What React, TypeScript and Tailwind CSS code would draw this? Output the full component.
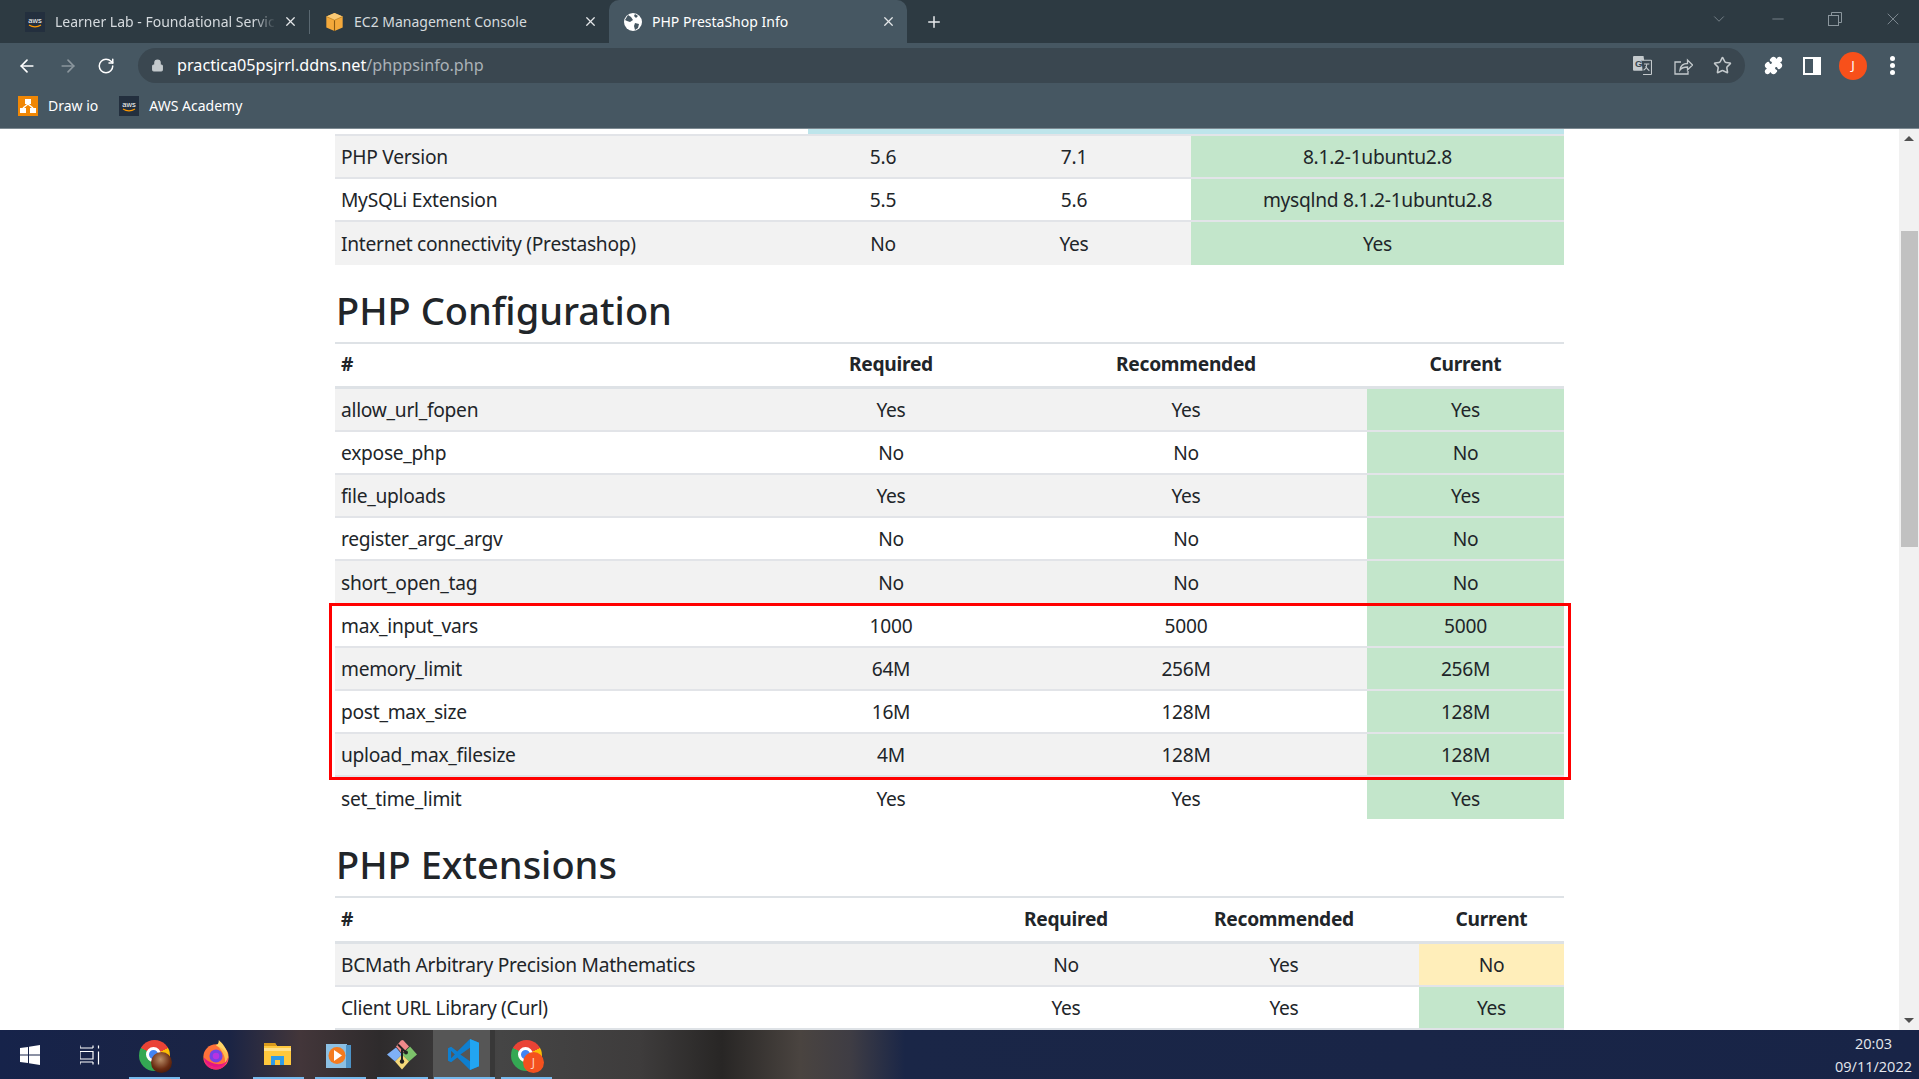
import type { ReactNode } from 'react'
import { ArrowLeft, ArrowRight, RotateCw, Lock, Plus, X, ChevronDown, Minus, Star, Puzzle } from 'lucide-react'

const font = "font-['Noto_Sans',sans-serif]"

const versionRows = [
  ['PHP Version', '5.6', '7.1', '8.1.2-1ubuntu2.8'],
  ['MySQLi Extension', '5.5', '5.6', 'mysqlnd 8.1.2-1ubuntu2.8'],
  ['Internet connectivity (Prestashop)', 'No', 'Yes', 'Yes'],
]

const configRows = [
  ['allow_url_fopen', 'Yes', 'Yes', 'Yes'],
  ['expose_php', 'No', 'No', 'No'],
  ['file_uploads', 'Yes', 'Yes', 'Yes'],
  ['register_argc_argv', 'No', 'No', 'No'],
  ['short_open_tag', 'No', 'No', 'No'],
  ['max_input_vars', '1000', '5000', '5000'],
  ['memory_limit', '64M', '256M', '256M'],
  ['post_max_size', '16M', '128M', '128M'],
  ['upload_max_filesize', '4M', '128M', '128M'],
  ['set_time_limit', 'Yes', 'Yes', 'Yes'],
]

const extensionRows = [
  ['BCMath Arbitrary Precision Mathematics', 'No', 'Yes', 'No'],
  ['Client URL Library (Curl)', 'Yes', 'Yes', 'Yes'],
]

function AwsIcon() {
  return (
    <svg width="20" height="20" viewBox="0 0 20 20" className="shrink-0">
      <rect width="20" height="20" fill="#232f3e" />
      <text x="10" y="11" textAnchor="middle" fontSize="7.500" fill="#fff" fontFamily="Liberation Sans">aws</text>
      <path d="M4 13c4 2.500 8 2.500 12 0" stroke="#f90" strokeWidth="1.200" fill="none" />
    </svg>
  )
}

function Tab({ label, icon, active, fade, className }: { label: string; icon: ReactNode; active?: boolean; fade?: boolean; className: string }) {
  return (
    <div className={`flex h-full items-center pr-[11px] ${className} ${active ? 'rounded-t-[10px] bg-[#465762]' : ''}`}>
      {icon}
      <span
        className={`ml-[10px] flex-1 overflow-hidden whitespace-nowrap text-[14px] ${active ? 'text-white' : 'text-[#d5dade]'} ${
          fade ? '[mask-image:linear-gradient(90deg,#000_90%,transparent)]' : ''
        }`}
      >
        {label}
      </span>
      <X size={15} className="ml-[7px] shrink-0 text-[#e4e7e9]" strokeWidth={2} />
    </div>
  )
}

function TabStrip() {
  return (
    <div className="flex h-[43px] shrink-0 items-center bg-[#2d3a42]">
      <Tab label="Learner Lab - Foundational Servic" icon={<AwsIcon />} fade className="w-[309px] pl-[25px]" />
      <div className="h-[24px] w-px bg-[#5a6871]" />
      <Tab
        label="EC2 Management Console"
        className="w-[299px] pl-[15px]"
        icon={
          <svg width="19" height="20" viewBox="0 0 20 22" className="shrink-0">
            <path d="M10 1l9 4v12l-9 4-9-4V5z" fill="#f4a93b" />
            <path d="M10 1l9 4-9 4-9-4z" fill="#f9c975" />
            <path d="M10 9v12" stroke="#8a5a12" strokeWidth="1.200" />
            <path d="M1 5l9 4 9-4" stroke="#b97d1f" strokeWidth="0.800" fill="none" />
          </svg>
        }
      />
      <Tab
        label="PHP PrestaShop Info"
        active
        className="w-[298px] pl-[15px]"
        icon={
          <svg width="18" height="18" viewBox="0 0 18 18" className="shrink-0">
            <circle cx="9" cy="9" r="9" fill="#fff" />
            <path d="M4 2l3 2 2 3-3 2-3-1-2-1zM11 10l4 1-1 4-3 2-1-4zM11 1l3 2-2 2-2-2z" fill="#465762" />
          </svg>
        }
      />
      <Plus size={18} className="ml-[18px] text-[#e8eaed]" strokeWidth={2} />
      <div className="flex-1" />
      <div className="flex items-center gap-[41px] pb-[6px] pr-[16px] text-[#8b969d]">
        <ChevronDown size={18} strokeWidth={1} />
        <Minus size={18} strokeWidth={1} />
        <svg width="14" height="14" viewBox="0 0 14 14" fill="none" stroke="currentColor">
          <rect x="0.500" y="3.500" width="10" height="10" />
          <path d="M3.500 3V.5h10v10H11" />
        </svg>
        <X size={20} strokeWidth={1} />
      </div>
    </div>
  )
}

function Toolbar() {
  return (
    <div className="flex h-[45px] shrink-0 items-start bg-[#465762] pt-[5px]">
      <div className="flex h-[35px] w-[138px] shrink-0 items-center pl-[17px] text-white">
        <ArrowLeft size={20} strokeWidth={2} />
        <ArrowRight size={20} strokeWidth={2} className="ml-[21px] text-[#8b969d]" />
        <RotateCw size={18} strokeWidth={2} className="ml-[19px]" />
      </div>
      <div className="flex h-[35px] w-[1607px] shrink-0 items-center rounded-full bg-[#3a4750] pl-[13px] pr-[13px]">
        <Lock size={13} className="text-[#c4cacd]" fill="#c4cacd" />
        <span className="ml-[13px] text-[16.200px] text-white">
          practica05psjrrl.ddns.net<span className="text-[#aab2b7]">/phppsinfo.php</span>
        </span>
        <div className="flex-1" />
        <div className="flex items-center text-[#c4cacd]">
          <svg width="19" height="19" viewBox="0 0 18 18">
            <path d="M1 0h9l2 14H1a1 1 0 0 1-1-1V1a1 1 0 0 1 1-1z" fill="#c4cacd" />
            <path d="M8 4h9a.5.5 0 0 1 .5.5V17a.5.5 0 0 1-.5.5H9.500" fill="#3a4750" stroke="#c4cacd" />
            <text x="5.500" y="10" textAnchor="middle" fontSize="9" fontWeight="700" fill="#3a4750" fontFamily="Liberation Sans">G</text>
            <path d="M10.500 7.500h5M13 7.500c0 3-1.500 5-3 6M12 9.500c.8 2 2 3.500 3.500 4.500" stroke="#c4cacd" strokeWidth="1" fill="none" />
          </svg>
          <svg width="19" height="18" viewBox="0 0 19 18" fill="none" stroke="currentColor" strokeWidth="1.300" className="ml-[22px]">
            <path d="M7 5H1v12h13v-3" />
            <path d="M6 13c.5-4 3.500-6.500 7.500-6.500V3L18.500 8l-5 5V10C10 10 7.500 11 6 13z" />
          </svg>
          <Star size={19} strokeWidth={2} className="ml-[20px]" />
        </div>
      </div>
      <div className="flex h-[35px] flex-1 items-center pl-[19px] text-white">
        <Puzzle size={19} fill="#fff" />
        <div className="ml-[20px] flex h-[18px] w-[18px] justify-end border-[2px] border-white bg-[#465762]">
          <div className="h-full w-[6px] bg-white" />
        </div>
        <div className="ml-[18px] flex h-[28px] w-[28px] items-center justify-center rounded-full bg-[#f8501a] text-[13px]">J</div>
        <div className="ml-[23px] flex flex-col gap-[2px]">
          <div className="h-[5px] w-[5px] rounded-full bg-white" />
          <div className="h-[5px] w-[5px] rounded-full bg-white" />
          <div className="h-[5px] w-[5px] rounded-full bg-white" />
        </div>
      </div>
    </div>
  )
}

function Bookmarks() {
  return (
    <div className="flex h-[41px] shrink-0 items-center border-b border-[#7d8a92] bg-[#465762] pb-[5px] pl-[18px] text-[14px] text-white">
      <svg width="20" height="20" viewBox="0 0 20 20" className="shrink-0">
        <rect width="20" height="20" fill="#f08705" />
        <rect x="7" y="3" width="6" height="5" fill="#fff" />
        <rect x="2" y="12" width="6" height="5" fill="#fff" />
        <rect x="12" y="12" width="6" height="5" fill="#fff" />
        <path d="M10 8l-5 4M10 8l5 4" stroke="#fff" strokeWidth="1.500" />
      </svg>
      <span className="ml-[10px]">Draw io</span>
      <div className="ml-[21px]">
        <AwsIcon />
      </div>
      <span className="ml-[10px]">AWS Academy</span>
    </div>
  )
}

function Cell({ children, bg, center }: { children: string; bg?: string; center?: boolean }) {
  return <td className={`overflow-hidden whitespace-nowrap px-[6px] pb-0 pt-[2px] ${center ? 'text-center' : ''} ${bg ?? ''}`}>{children}</td>
}

function DataTable({
  rows,
  cols,
  currentBg,
  head,
  bottomLine,
}: {
  rows: string[][]
  cols: number[]
  currentBg?: (r: string[]) => string
  head?: boolean
  bottomLine?: boolean
}) {
  return (
    <table className={`w-[1229px] table-fixed border-collapse ${bottomLine ? 'border-b-2 border-[#dee2e6]' : ''}`}>
      <colgroup>
        {cols.map((w, i) => (
          <col key={i} style={{ width: w }} />
        ))}
      </colgroup>
      {head && (
        <thead>
          <tr className="h-[45px] border-t-2 border-b-[3px] border-[#dee2e6] font-bold">
            <th className="px-[6px] text-left">#</th>
            <th className="text-center">Required</th>
            <th className="text-center">Recommended</th>
            <th className="text-center">Current</th>
          </tr>
        </thead>
      )}
      <tbody>
        {rows.map((r, i) => (
          <tr key={r[0]} className={`h-[43.200px] border-t-2 border-[#e2e4e8] ${i % 2 === 0 ? 'bg-[#f2f2f2]' : 'bg-white'}`}>
            <Cell>{r[0]}</Cell>
            <Cell center>{r[1]}</Cell>
            <Cell center>{r[2]}</Cell>
            <Cell center bg={currentBg ? currentBg(r) : 'bg-[#c3e6cb]'}>{r[3]}</Cell>
          </tr>
        ))}
      </tbody>
    </table>
  )
}

function Heading({ children }: { children: string }) {
  return <h2 className="mb-[9px] mt-[22px] pl-px text-[38px] font-medium leading-[46px] tracking-normal text-[#212529]">{children}</h2>
}

function Page() {
  return (
    <div className="relative min-h-0 flex-1 overflow-hidden bg-white">
      <div className="flex h-full">
        <div className={`min-w-0 flex-1 pl-[335px] text-[19.200px] tracking-[-0.280px] text-[#212529] ${font}`}>
          <div className="ml-[473px] h-[5px] w-[756px] bg-[#bee5eb]" />
          <DataTable rows={versionRows} cols={[474, 148, 234, 373]} />
          <Heading>PHP Configuration</Heading>
          <DataTable rows={configRows} cols={[442, 228, 362, 197]} head />
          <Heading>PHP Extensions</Heading>
          <DataTable
            rows={extensionRows}
            cols={[648, 166, 270, 145]}
            head
            bottomLine
            currentBg={(r) => (r[3] === 'No' ? 'bg-[#ffeeba]' : 'bg-[#c3e6cb]')}
          />
        </div>
        <div className="flex h-full w-[20px] shrink-0 flex-col items-center justify-between bg-[#f1f1f1] py-[7px]">
          <div className="h-0 w-0 border-x-[5px] border-b-[5px] border-x-transparent border-b-[#505050]" />
          <div className="h-0 w-0 border-x-[5px] border-t-[5px] border-x-transparent border-t-[#505050]" />
        </div>
      </div>
      <div className="absolute right-[1px] top-[102px] h-[316px] w-[17px] bg-[#c1c1c1]" />
      <div className="absolute left-[329px] top-[474px] h-[177px] w-[1242px] border-[3px] border-[#ff0000]" />
    </div>
  )
}

function ChromeIcon({ badge }: { badge?: boolean }) {
  return (
    <div className="relative h-[31px] w-[31px]">
      <div className="h-full w-full rounded-full bg-[conic-gradient(#ea4335_0deg_60deg,#fbbc05_60deg_180deg,#34a853_180deg_300deg,#ea4335_300deg_360deg)]" />
      <div className="absolute left-[7px] top-[7px] h-[15px] w-[15px] rounded-full border-[3px] border-white bg-[#4285f4]" />
      {badge ? (
        <div className="absolute left-[12px] top-[12px] flex h-[21px] w-[21px] items-center justify-center rounded-full bg-[#f4511e] text-[12px] text-[#ffd0bd]">J</div>
      ) : (
        <div className="absolute left-[12px] top-[12px] h-[21px] w-[21px] rounded-full bg-[radial-gradient(circle_at_45%_35%,#b98e68,#6b2c12_55%,#2a0f05)]" />
      )}
    </div>
  )
}

function Taskbar() {
  const slot = 'absolute bottom-0 h-[2px] bg-[#76b9ed]'
  return (
    <div className="relative flex h-[49px] shrink-0 items-center bg-[linear-gradient(90deg,#16234a_0px,#1b2444_230px,#43363a_300px,#2e2b2c_380px,#454545_500px,#3e3c3c_640px,#282625_722px,#4a4440_800px,#3f3d44_850px,#1a2647_905px,#182447_1919px)] text-white">
      <div className="flex h-full items-center">
        <svg width="20" height="20" viewBox="0 0 20 20" className="ml-[20px]" fill="#fff">
          <path d="M0 3l8-1v7.500H0zM9 1.800L20 0v9.500H9zM0 10.500h8V18l-8-1zM9 10.500h11V20L9 18.200z" />
        </svg>
        <svg width="20" height="20" viewBox="0 0 20 20" className="ml-[40px]" fill="none" stroke="#fff" strokeWidth="1.200">
          <path d="M0 3V0.500M13 3V0.500M0 3h13M0 6.500h13v7.500H0zM0 17h13M0 19.500V17M13 19.500V17M18.500 0.500v3M18.500 6.500v13" />
        </svg>
      </div>
      <div className="absolute left-[139px] top-[10px]"><ChromeIcon /></div>
      <svg width="28" height="30" viewBox="0 0 28 32" className="absolute left-[202px] top-[10px]">
        <circle cx="14" cy="18" r="13.500" fill="#ff7139" />
        <path d="M14 5c6-1 13 5 13 13 0 4-2 8-4 9 2-6 0-14-9-22z" fill="#ffbd4f" />
        <path d="M17 0c4 4 8 8 9 15-3-5-7-8-12-9 2-1 3-3 3-6z" fill="#ffd567" />
        <circle cx="14" cy="17" r="7" fill="#7542e5" />
        <circle cx="14" cy="17" r="3.500" fill="#b833e1" />
        <path d="M1 19c1 9 17 16 25 3-4 5-15 6-25-3z" fill="#e31587" />
        <path d="M1 19c1 11 21 15 26-1 0 4-3 13-13 13.500C6 31.500 1 26 1 19z" fill="#f0227a" />
      </svg>
      <svg width="27" height="22" viewBox="0 0 27 22" className="absolute left-[264px] top-[13px]">
        <path d="M0 0h11l2 3h14v19H0z" fill="#ffc83d" />
        <path d="M0 0h11l2 3H0z" fill="#d99a1c" />
        <rect x="0" y="5" width="27" height="3" fill="#ffe08a" />
        <path d="M7 22v-9h13v9h-4v-5h-5v5z" fill="#2f9be8" />
      </svg>
      <svg width="25" height="24" viewBox="0 0 25 24" className="absolute left-[326px] top-[14px]">
        <rect x="0" y="0" width="21" height="24" fill="#8cc0e4" />
        <rect x="20" y="1" width="5" height="23" fill="#4d93c7" />
        <circle cx="11" cy="11.500" r="8.500" fill="#f47b20" />
        <path d="M8 6l8 5.500L8 17z" fill="#fff" />
      </svg>
      <svg width="30" height="31" viewBox="0 0 30 30" className="absolute left-[387px] top-[9px]">
        <path d="M15 14L9 7l5-6 2-.5 6 6.500z" fill="#f08a8a" />
        <path d="M15 15l8-8 7 8-8 7z" fill="#7cc36a" />
        <path d="M15 15L9 8l-9 7 8 7z" fill="#7fb0f5" />
        <path d="M15 15l7 7-7 8-7-8z" fill="#f5d97a" />
        <path d="M11 5l7 7M15 10v12" stroke="#222" strokeWidth="2" />
        <circle cx="15" cy="22" r="2.200" fill="#222" />
        <circle cx="19" cy="13" r="2" fill="#222" />
      </svg>
      <div className="absolute left-[433px] top-0 h-full w-[57px] bg-[#565656]" />
      <div className="absolute left-[490px] top-0 h-full w-[5px] bg-[#383838]" />
      <svg width="31" height="31" viewBox="0 0 100 100" className="absolute left-[448px] top-[9px]">
        <path d="M71 0L30 40 10 25 0 30v40l10 5 20-15 41 40 29-12V12z" fill="#0e7fd0" />
        <path d="M71 0l29 12v76l-29 12z" fill="#22a5f1" />
        <path d="M71 28L40 50l31 22z" fill="#565656" />
        <path d="M10 38v24l12-12z" fill="#565656" />
      </svg>
      <div className="absolute left-[511px] top-[10px]"><ChromeIcon badge /></div>
      <div className={`${slot} left-[129px] w-[51px]`} />
      <div className={`${slot} left-[253px] w-[51px]`} />
      <div className={`${slot} left-[315px] w-[51px]`} />
      <div className={`${slot} left-[377px] w-[51px]`} />
      <div className={`${slot} left-[434px] w-[61px]`} />
      <div className={`${slot} left-[501px] w-[51px]`} />
      <div className="ml-auto flex flex-col items-center pr-[7px] font-['Open_Sans',sans-serif] text-[14.500px] leading-[23px] text-[#e6e8ee]">
        <span>20:03</span>
        <span>09/11/2022</span>
      </div>
    </div>
  )
}

export default function App() {
  return (
    <div className={`flex h-screen w-full flex-col overflow-hidden ${font}`}>
      <TabStrip />
      <Toolbar />
      <Bookmarks />
      <Page />
      <Taskbar />
    </div>
  )
}
